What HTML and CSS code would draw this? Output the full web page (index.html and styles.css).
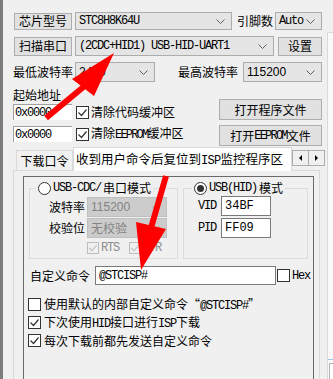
FILE: index.html
```html
<!DOCTYPE html>
<html>
<head>
<meta charset="utf-8">
<title>STC-ISP</title>
<link rel="stylesheet" href="styles.css">
</head>
<body>
<div class="app">
  <div class="main">
    <div class="row r1">
      <span class="btn b-chip">芯片型号</span>
      <span class="combo c-mcu"><span class="en">STC8H8K64U</span><svg class="chev" width="9" height="5" viewBox="0 0 9 5"><path d="M0.5 0.5 L4.5 4.5 L8.5 0.5"/></svg></span>
      <span class="lbl l-pins">引脚数</span>
      <span class="combo c-pins"><span class="en">Auto</span><svg class="chev" width="9" height="5" viewBox="0 0 9 5"><path d="M0.5 0.5 L4.5 4.5 L8.5 0.5"/></svg></span>
    </div>
    <div class="row r2">
      <span class="btn b-scan">扫描串口</span>
      <span class="combo c-port"><span class="en">(2CDC+HID1) USB-HID-UART1</span><svg class="chev" width="9" height="5" viewBox="0 0 9 5"><path d="M0.5 0.5 L4.5 4.5 L8.5 0.5"/></svg></span>
      <span class="btn b-set">设置</span>
    </div>
    <div class="row r3">
      <span class="lbl l-min">最低波特率</span>
      <span class="combo c-min"><span class="num">2400</span><svg class="chev" width="9" height="5" viewBox="0 0 9 5"><path d="M0.5 0.5 L4.5 4.5 L8.5 0.5"/></svg></span>
      <span class="lbl l-max">最高波特率</span>
      <span class="combo c-max"><span class="num">115200</span><svg class="chev" width="9" height="5" viewBox="0 0 9 5"><path d="M0.5 0.5 L4.5 4.5 L8.5 0.5"/></svg></span>
    </div>

    <div class="files">
      <div class="addr">
        <div class="addr-title">起始地址</div>
        <div class="addr-row">
          <span class="field en">0x0000</span>
          <span class="chk"><svg width="11" height="11" viewBox="0 0 11 11"><path d="M1.5 5.5 L4.5 8.5 L9.5 2.5"/></svg></span>
          <span class="chk-text">清除代码缓冲区</span>
        </div>
        <div class="addr-row second">
          <span class="field en">0x0000</span>
          <span class="chk"><svg width="11" height="11" viewBox="0 0 11 11"><path d="M1.5 5.5 L4.5 8.5 L9.5 2.5"/></svg></span>
          <span class="chk-text">清除<span class="en e9">EEPROM</span>缓冲区</span>
        </div>
      </div>
      <div class="open">
        <span class="btn b-open">打开程序文件</span>
        <span class="btn b-open">打开<span class="en e9">EEPROM</span>文件</span>
      </div>
    </div>

    <div class="tabs">
      <span class="tab">下载口令</span>
      <span class="tab on"><span class="tab-text">收到用户命令后复位到<span class="en e11">ISP</span>监控程序区</span></span>
      <span class="tab-scroll"><span class="sbtn"><i class="tri left"></i></span><span class="sbtn"><i class="tri right"></i></span></span>
    </div>

    <div class="pane">
      <div class="group">
        <div class="modes">
          <div class="sub sub-cdc">
            <span class="sub-title"><span class="radio"></span><span class="en">USB-CDC/</span>串口模式</span>
            <div class="frow">
              <span class="flabel">波特率</span>
              <span class="combo off c-dis"><span class="num">115200</span><svg class="chev" width="9" height="5" viewBox="0 0 9 5"><path d="M0.5 0.5 L4.5 4.5 L8.5 0.5"/></svg></span>
            </div>
            <div class="frow">
              <span class="flabel">校验位</span>
              <span class="combo off c-dis"><span>无校验</span><svg class="chev" width="9" height="5" viewBox="0 0 9 5"><path d="M0.5 0.5 L4.5 4.5 L8.5 0.5"/></svg></span>
            </div>
            <div class="lines">
              <span class="chk off"><svg width="10" height="10" viewBox="0 0 11 11"><path d="M1.5 5.5 L4.5 8.5 L9.5 2.5"/></svg></span>
              <span class="en dim">RTS</span>
              <span class="chk off dtr"><svg width="10" height="10" viewBox="0 0 11 11"><path d="M1.5 5.5 L4.5 8.5 L9.5 2.5"/></svg></span>
              <span class="en dim">DTR</span>
            </div>
          </div>
          <div class="sub sub-hid">
            <span class="sub-title"><span class="radio on"></span><span class="en">USB(HID)</span>模式</span>
            <div class="hrow">
              <span class="en hlabel">VID</span>
              <span class="field box en e12">34BF</span>
            </div>
            <div class="hrow">
              <span class="en hlabel">PID</span>
              <span class="field box en e12">FF09</span>
            </div>
          </div>
        </div>

        <div class="cmd">
          <span class="cmd-label">自定义命令</span>
          <span class="field box cmd-input en">@STCISP#</span>
          <span class="chk empty"></span>
          <span class="en hex">Hex</span>
        </div>

        <div class="opts">
          <div class="opt"><span class="chk empty"></span><span>使用默认的内部自定义命令“<span class="en">@STCISP#</span>”</span></div>
          <div class="opt"><span class="chk"><svg width="11" height="11" viewBox="0 0 11 11"><path d="M1.5 5.5 L4.5 8.5 L9.5 2.5"/></svg></span><span>下次使用<span class="en">HID</span>接口进行<span class="en">ISP</span>下载</span></div>
          <div class="opt"><span class="chk"><svg width="11" height="11" viewBox="0 0 11 11"><path d="M1.5 5.5 L4.5 8.5 L9.5 2.5"/></svg></span><span>每次下载前都先发送自定义命令</span></div>
        </div>
      </div>
    </div>
  </div>

  <div class="side">
    <div class="side-foot"><div class="side-box"></div></div>
  </div>
</div>

<svg class="arrows" width="333" height="379" viewBox="0 0 333 379">
  <line x1="46" y1="118" x2="87" y2="84" stroke="#ff0000" stroke-width="6"/>
  <polygon points="114,53 72,79 94,96" fill="#ff0000"/>
  <line x1="166" y1="176" x2="151" y2="228" stroke="#ff0000" stroke-width="6"/>
  <polygon points="141,270 136,222 166,229" fill="#ff0000"/>
</svg>
</body>
</html>
```

FILE: styles.css
```css
* { box-sizing: border-box; }
html, body { margin: 0; }
body {
  width: 333px; height: 379px; overflow: hidden; position: relative;
  background: #f0f0f0; color: #000;
  font-family: "Noto Sans CJK SC", sans-serif; font-size: 12px; line-height: 14px;
  white-space: nowrap;
}
/* latin text in the old bitmap style: narrow courier cells */
.en { font-family: "Liberation Mono", monospace; font-size: 12px; letter-spacing: -1.2px; }
.e9 { font-size: 12px; letter-spacing: -1.8px; }
.e11 { font-size: 12px; letter-spacing: -0.7px; }
.e12 { font-size: 12px; letter-spacing: 0; }
.num { font-family: "Liberation Sans", sans-serif; font-size: 12px; }

.app { display: flex; height: 379px; }
.main { width: 324px; border-left: 3px solid #7c7c7c; padding: 12px 2px 0 10px; }
.side {
  flex: 1; margin: 32px 0 0 3px; border-left: 1px solid #dadada; border-top: 1px solid #dadada;
  background: #f9f9f9; display: flex; flex-direction: column;
}
.side-foot { margin-top: auto; height: 20px; border-top: 1px solid #9cc8e6; padding: 3px 0 0 1px; }
.side-box { height: 100%; border: 1px solid #b4b4b4; border-right: 0; border-bottom: 0; background: #fff; }

/* common controls */
.row { display: flex; align-items: center; }
.btn {
  display: flex; align-items: center; justify-content: center;
  background: #e1e1e1; border: 1px solid #adadad;
}
.combo {
  display: flex; align-items: center; justify-content: space-between;
  background: #e5e5e5; border: 1px solid #acacac; padding: 0 6px 0 3px; height: 20px;
}
.chev { fill: none; stroke: #606060; stroke-width: 1; }
.combo.off { background: #cccccc; border-color: #bfbfbf; color: #838383; }
.combo.off .chev { stroke: #a6a6a6; }
.field {
  display: flex; align-items: center; background: #fff; padding-left: 1px;
  border-top: 1px solid #a0a0a0; border-left: 1px solid #a0a0a0;
}
.field.box { border: 1px solid #7a7a7a; padding-left: 3px; }
.chk {
  display: inline-flex; align-items: center; justify-content: center; flex: none;
  width: 13px; height: 13px; background: #fff; border: 1px solid #333;
}
.chk svg { fill: none; stroke: #333; stroke-width: 1.2; }
.chk.off { width: 12px; height: 12px; background: #f0f0f0; border-color: #bcbcbc; }
.chk.off svg { stroke: #bcbcbc; }
.radio {
  display: inline-flex; align-items: center; justify-content: center;
  width: 13px; height: 13px; border-radius: 50%; border: 1px solid #333; background: #fff;
}
.radio.on::after { content: ""; width: 7px; height: 7px; border-radius: 50%; background: #333; }

/* top rows */
.r1 { height: 18px; }
.b-chip { width: 58px; height: 17px; margin-left: 1px; }
.c-mcu { width: 157px; height: 18px; margin-left: 3px; }
.l-pins { margin-left: 5px; width: 38px; }
.c-pins { width: 47px; height: 18px; }
.r2 { height: 20px; margin-top: 6px; }
.b-scan { width: 58px; height: 19px; margin-left: 1px; }
.c-port { width: 199px; margin-left: 3px; }
.b-set { width: 44px; height: 19px; margin-left: 4px; }
.r3 { height: 20px; margin-top: 6px; }
.l-min { width: 62px; }
.c-min { width: 80px; }
.l-max { width: 60px; margin-left: 23px; }
.c-max { width: 79px; margin-left: 5px; }

/* address + file buttons */
.files { display: flex; margin-top: 4px; }
.addr { flex: 1; }
.addr-title { height: 18px; padding-top: 2px; }
.addr-row { display: flex; align-items: center; height: 16px; }
.addr-row.second { margin-top: 6px; }
.addr-row .field { width: 59px; height: 16px; }
.addr-row .chk { margin-left: 4px; }
.chk-text { margin-left: 2px; }
.open { width: 103px; padding-top: 13px; }
.b-open { height: 21px; }
.b-open + .b-open { margin-top: 5px; }

/* tabs */
.tabs { display: flex; align-items: flex-end; height: 22px; margin-top: 2px; padding-left: 3px; position: relative; z-index: 1; }
.tab {
  display: flex; align-items: center; justify-content: center; flex: none;
  width: 57px; height: 20px; border: 1px solid #d9d9d9; border-bottom: 0; background: #f0f0f0;
}
.tab.on {
  width: auto; height: 24px; margin-bottom: -1px; background: #fff;
  justify-content: flex-start; padding: 0 8px 0 2px;
}
.tab-text { font-size: 12.5px; }
.tab-scroll { display: flex; align-self: flex-start; margin: 2px 0 0 auto; }
.sbtn {
  display: flex; align-items: center; justify-content: center;
  width: 17px; height: 16px; background: #f0f0f0; border: 1px solid #adadad;
}
.sbtn + .sbtn { margin-left: -1px; }
.tri { width: 0; height: 0; border-top: 3px solid transparent; border-bottom: 3px solid transparent; }
.tri.left { border-right: 3px solid #000; }
.tri.right { border-left: 3px solid #000; }

/* the pane runs off the bottom of the window */
.pane {
  width: 307px; height: 209px; border: 1px solid #d9d9d9; border-bottom: 0;
  background: #f0f0f0; padding: 5px 0 0 9px;
}
.group { width: 291px; height: 203px; border: 1px solid #6a6a6a; border-bottom: 0; }

/* mode boxes */
.modes { display: flex; margin-top: 11px; }
.sub { position: relative; height: 71px; border: 1px solid #dcdcdc; margin-left: 5px; }
.sub-cdc { width: 149px; padding-top: 8px; }
.sub-hid { width: 125px; padding-top: 7px; }
.sub-title {
  position: absolute; top: -8px; display: flex; align-items: center; gap: 2px;
  padding: 0 2px; background: #f0f0f0; height: 14px;
}
.sub-cdc .sub-title { left: 6px; }
.sub-hid .sub-title { left: 8px; }
.frow { display: flex; align-items: center; height: 20px; }
.frow + .frow { margin-top: 1px; }
.flabel { width: 55px; text-align: right; margin-right: 2px; }
.c-dis { width: 80px; }
.lines { display: flex; align-items: center; height: 12px; margin: 4px 0 0 57px; }
.dim { color: #8c8c8c; margin-left: 2px; }
.dtr { margin-left: 10px; }
.hrow { display: flex; align-items: center; height: 20px; padding-left: 14px; }
.hrow + .hrow { margin-top: 2px; }
.hlabel { width: 23px; }
.hrow .field { width: 50px; height: 20px; }

/* custom command */
.cmd { display: flex; align-items: center; height: 19px; margin-top: 7px; padding-left: 6px; }
.cmd-label { width: 65px; }
.cmd-input { width: 181px; height: 19px; }
.cmd .chk { margin-left: 1px; }
.hex { margin-left: 2px; }
.opts { margin-top: 13px; padding-left: 4px; }
.opt { display: flex; align-items: center; gap: 3px; height: 13px; }
.opt + .opt { margin-top: 5px; }

.arrows { position: absolute; left: 0; top: 0; pointer-events: none; }
```
